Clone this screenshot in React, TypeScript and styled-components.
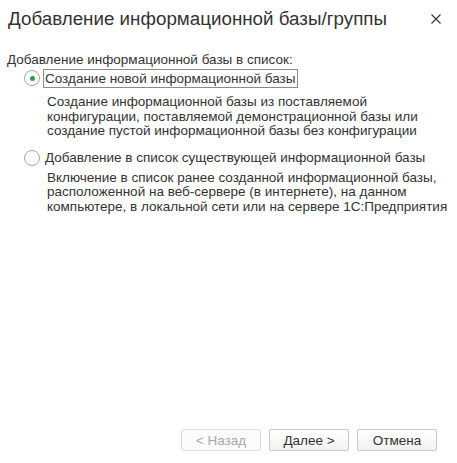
import React, { useState } from 'react'
import styled, { createGlobalStyle } from 'styled-components'

const GlobalStyle = createGlobalStyle`
  html, body {
    margin: 0;
    padding: 0;
    background: #ffffff;
  }
`

const Window = styled.div`
  width: 457px;
  height: 463px;
  box-sizing: border-box;
  display: flex;
  flex-direction: column;
  font-family: Arial, "Liberation Sans", sans-serif;
  color: #333333;
  background: #ffffff;
`

const Header = styled.div`
  display: flex;
  align-items: center;
  justify-content: space-between;
  height: 38px;
  padding: 0 15px 0 8px;
`

const Title = styled.div`
  font-size: 18.8px;
  color: #333333;
  white-space: nowrap;
`

const Close = styled.div`
  width: 12px;
  height: 12px;
  display: flex;
  align-items: center;
  justify-content: center;
  cursor: pointer;
`

const Body = styled.div`
  flex: 1;
  padding: 14px 7px 0 7px;
  font-size: 13.5px;
`

const Caption = styled.div`
  line-height: 15px;
  margin-bottom: 1px;
`

const Option = styled.div`
  padding-left: 17px;
  margin-bottom: 9px;
`

const OptionRow = styled.label`
  display: flex;
  align-items: center;
  height: 20px;
  cursor: pointer;
`

const Radio = styled.span<{ $checked: boolean }>`
  width: 16px;
  height: 16px;
  box-sizing: border-box;
  border-radius: 50%;
  border: 1px solid #a4a4a4;
  background: #ffffff;
  display: flex;
  align-items: center;
  justify-content: center;
  flex-shrink: 0;
  margin-right: 3px;

  &::after {
    content: '';
    width: 5px;
    height: 5px;
    border-radius: 50%;
    background: #2f9e44;
    display: ${p => (p.$checked ? 'block' : 'none')};
  }
`

const OptionText = styled.span<{ $focused: boolean }>`
  padding: 1px 1px 1px 1px;
  border: 1px solid ${p => (p.$focused ? '#8a8a8a' : 'transparent')};
  line-height: 15px;
  white-space: nowrap;
`

const Description = styled.div<{ $gap: number }>`
  padding-left: 23px;
  padding-top: ${p => p.$gap}px;
  line-height: 14.6px;
`

const Footer = styled.div`
  display: flex;
  justify-content: flex-end;
  gap: 8px;
  padding: 0 20px 12px 0;
`

const Button = styled.button`
  width: 80px;
  height: 22px;
  box-sizing: border-box;
  border: 1px solid #c8c8c8;
  border-radius: 2px;
  background: linear-gradient(#ffffff, #f2f2f2);
  font-family: Arial, "Liberation Sans", sans-serif;
  font-size: 13.5px;
  color: #333333;
  padding: 0;
  cursor: pointer;

  &:disabled {
    color: #a8a8a8;
    border-color: #dddddd;
    background: #fbfbfb;
    cursor: default;
  }
`

const options = [
  {
    title: 'Создание новой информационной базы',
    lines: [
      'Создание информационной базы из поставляемой',
      'конфигурации, поставляемой демонстрационной базы или',
      'создание пустой информационной базы без конфигурации',
    ],
  },
  {
    title: 'Добавление в список существующей информационной базы',
    lines: [
      'Включение в список ранее созданной информационной базы,',
      'расположенной на веб-сервере (в интернете), на данном',
      'компьютере, в локальной сети или на сервере 1С:Предприятия',
    ],
  },
]

const App = () => {
  const [selected, setSelected] = useState(0)

  return (
    <>
      <GlobalStyle />
      <Window>
        <Header>
          <Title>Добавление информационной базы/группы</Title>
          <Close>
            <svg width="10" height="10" viewBox="0 0 10 10">
              <path d="M0.5 0.5 L9.5 9.5 M9.5 0.5 L0.5 9.5" stroke="#333" strokeWidth="1.1" />
            </svg>
          </Close>
        </Header>
        <Body>
          <Caption>Добавление информационной базы в список:</Caption>
          {options.map((o, i) => (
            <Option key={o.title}>
              <OptionRow onClick={() => setSelected(i)}>
                <Radio $checked={selected === i} />
                <OptionText $focused={selected === i}>{o.title}</OptionText>
              </OptionRow>
              <Description $gap={selected === i ? 7 : 3}>
                {o.lines.map(l => (
                  <div key={l}>{l}</div>
                ))}
              </Description>
            </Option>
          ))}
        </Body>
        <Footer>
          <Button disabled>&lt; Назад</Button>
          <Button>Далее &gt;</Button>
          <Button>Отмена</Button>
        </Footer>
      </Window>
    </>
  )
}

export default App
